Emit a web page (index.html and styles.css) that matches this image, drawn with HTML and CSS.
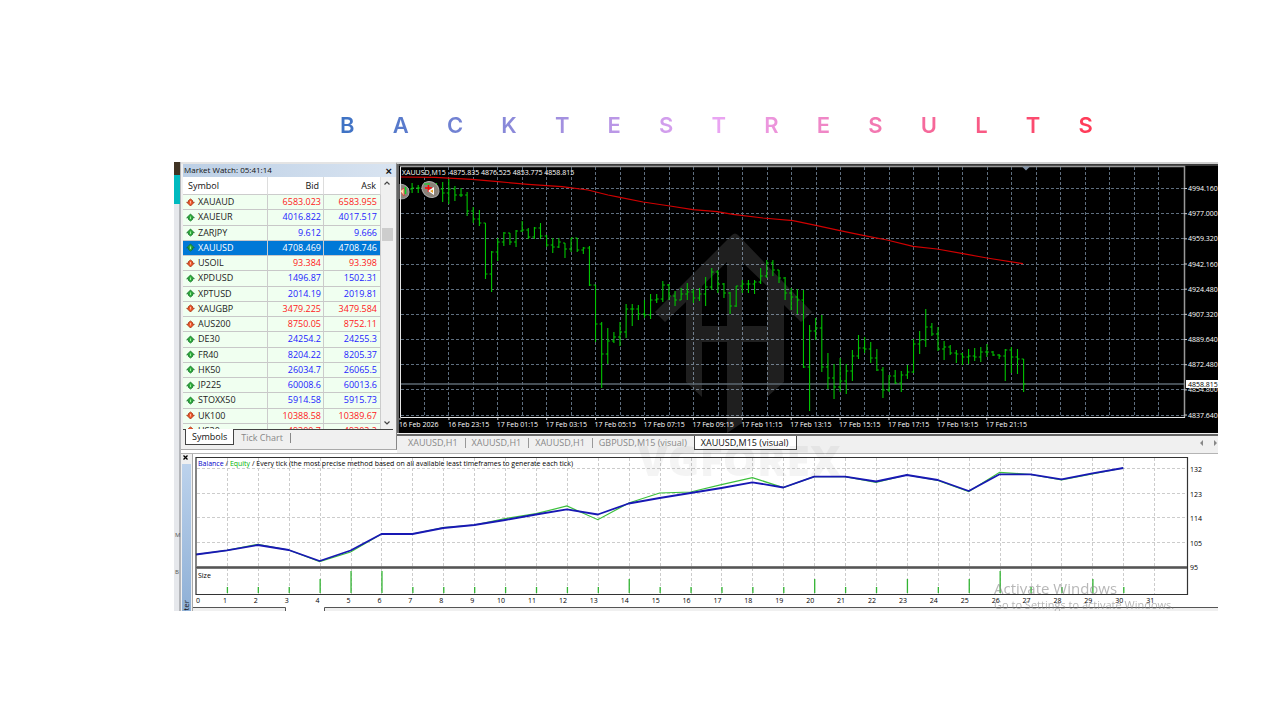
FILE: index.html
```html
<!DOCTYPE html>
<html lang="en">
<head>
<meta charset="utf-8">
<title>Backtest Results</title>
<link rel="stylesheet" href="styles.css">
</head>
<body>
<h1 class="title"><span>B</span><span>A</span><span>C</span><span>K</span><span>T</span><span>E</span><span>S</span><span>T</span><span>R</span><span>E</span><span>S</span><span>U</span><span>L</span><span>T</span><span>S</span></h1>
<main class="screen">
  <div class="strip"><i class="strip-dark"></i><i class="strip-teal"></i><span class="strip-m">M</span><span class="strip-b">B</span></div>
  <div class="app">
    <div class="top">
      <section class="watch">
        <header class="watch-bar"><span>Market Watch: 05:41:14</span><button class="close" aria-label="Close">×</button></header>
        <div class="watch-body">
          <div class="list">
            <table class="quotes">
              <thead><tr><th>Symbol</th><th>Bid</th><th>Ask</th></tr></thead>
              <tbody id="quotes"></tbody>
            </table>
          </div>
          <div class="scroll">
            <svg viewBox="0 0 8 6"><path d="M1.500 4.500L4 2L6.500 4.500"/></svg>
            <i class="thumb"></i>
            <svg viewBox="0 0 8 6"><path d="M1.500 1.500L4 4L6.500 1.500"/></svg>
          </div>
        </div>
        <nav class="watch-tabs"><button class="on">Symbols</button><button>Tick Chart</button></nav>
      </section>
      <section class="chart">
        <svg class="plot" viewBox="397 162 821 271" role="img" aria-label="XAUUSD M15 chart">
          <rect x="397" y="162" width="821" height="271" fill="#000"/>
          <rect x="397" y="162" width="821" height="2" fill="#d0d0d0"/>
          <rect x="397" y="164" width="821" height="2" fill="#3a3a3a"/>
          <rect x="397" y="164" width="2" height="269" fill="#666"/>
          <path id="grid" class="grid"/>
          <g class="mark">
            <path d="M732 235Q735 232 738 235L812 312L801 322L784 305V382L767 397V342H742V423L727 433V342H702V397L686 382V302L665 322L655 312ZM727 262L702 286V326H727ZM742 262V326H767V286Z" fill-rule="evenodd"/>
          </g>
          <path d="M400 384H1184" stroke="#5c6872" stroke-width="1.500"/>
          <path class="ma" d="M400 177L435 177.300L472 179.300L498 181.700L528 184.300L562 186.700L588 190L608 195L620 197.300L643 202L670 206L693 209.700L717 211.700L733 214.300L763 218L793 220.700L817 225.700L840 230.700L863 235.300L887 240L913 246.300L937 249L963 253.700L987 258L1023 263.700"/>
          <path id="bars" class="bars"/>
          <g>
            <path d="M400 184Q409 185 409 192T400 199Z" fill="#8b8279" stroke="#aaa"/>
            <path d="M400 191L404 188V196Z" fill="#ffe0b0" stroke="#d33" stroke-width=".8"/><path d="M405.500 187V194" stroke="#0d2" stroke-width="1.500"/>
            <ellipse cx="430.500" cy="189.500" rx="9" ry="7.500" transform="rotate(35 430.500 189.500)" fill="#8b8279" stroke="#aaa"/>
            <path d="M425 188H432M428.500 185V192" stroke="#f00" stroke-width="1.500"/><path d="M428 191L434 187V195Z" fill="#fff"/><path d="M430 191L433 189.500V193Z" fill="#e8a020"/>
            <path d="M424 184H430" stroke="#0d2"/>
          </g>
          <path d="M400 166.500H1184.500V417.500" fill="none" stroke="#999" stroke-width="1.500"/>
          <path d="M400.500 167V417.500H1185" fill="none" stroke="#e8e8e8"/>
          <path d="M1022 166.500H1030L1026 170.500Z" fill="#8090a4"/>
          <g id="axes" class="axis"></g>
          <text x="402" y="175" class="tiny light">XAUUSD,M15&#160; 4875.835 4876.525 4853.775 4858.815</text>
          <rect x="1186" y="380" width="32" height="8" fill="#fff"/>
          <text x="1188" y="387" class="tiny">4858.815</text>
        </svg>
        <nav class="chart-tabs">
          <button>XAUUSD,H1</button><button>XAUUSD,H1</button><button>XAUUSD,H1</button><button>GBPUSD,M15 (visual)</button><button class="on">XAUUSD,M15 (visual)</button>
          <svg class="arrows" viewBox="0 0 20 8"><path d="M5 1V7L2 4ZM16 1V7L19 4Z" fill="#888"/></svg>
        </nav>
      </section>
    </div>
    <svg class="tester" viewBox="181 453 1037 158" role="img" aria-label="Strategy tester graph">
      <defs><linearGradient id="side" x1="0" y1="0" x2="0" y2="1"><stop offset="0" stop-color="#bcd2ec"/><stop offset="1" stop-color="#8fb0d6"/></linearGradient></defs>
      <rect x="181" y="453" width="1037" height="158" fill="#fff"/>
      <rect x="181" y="453" width="11" height="158" fill="#f0f0f0"/>
      <path d="M181 453.500H1218" stroke="#b4b4b4"/>
      <rect x="182" y="464" width="9" height="147" fill="url(#side)"/>
      <path d="M192.500 454V611" stroke="#aaa"/>
      <path d="M183.500 455.500L187.500 459.500M187.500 455.500L183.500 459.500" stroke="#000" stroke-width="1.300"/>
      <text class="side-label" transform="translate(189 600) rotate(-90)" text-anchor="end">Tester</text>
      <path id="tgrid" class="tgrid"/>
      <path id="sizes" stroke="#32b432" stroke-width="1.300"/>
      <path id="equity" fill="none" stroke="#3cc03c" stroke-width="1.200"/>
      <path id="balance" fill="none" stroke="#1818b4" stroke-width="1.800" stroke-linejoin="round"/>
      <path d="M196 594.500V457.500H1187.500V594.500Z" fill="none" stroke="#333" stroke-width="1.200"/>
      <rect x="196" y="566" width="991" height="3" fill="#777"/><rect x="196" y="567" width="991" height="1" fill="#555"/>
      <text x="198" y="466" class="tiny"><tspan fill="#0000c8">Balance</tspan> / <tspan fill="#00b400">Equity</tspan> / Every tick (the most precise method based on all available least timeframes to generate each tick)</text>
      <text x="198" y="578" class="tiny">Size</text>
      <g id="taxes" class="tiny"></g>
      <rect x="193" y="608" width="1025" height="3" fill="#f0f0f0"/><rect x="286" y="607" width="38" height="4" fill="#fff"/>
      <path d="M193 607.500H285.500V611M324.500 611V607.500H1218" fill="none" stroke="#555"/>
      <text x="994" y="594" class="act-a">Activate Windows</text>
      <text x="994" y="609" class="act-b">Go to Settings to activate Windows.</text>
      <text x="638" y="476" class="brand">VGFOREX</text>
    </svg>
  </div>
</main>
<script src="chart.js"></script>
</body>
</html>
```
FILE: styles.css
```css
* { box-sizing: border-box; }
body { margin: 0; background: #fff; font-family: "Open Sans", "Noto Sans", sans-serif; color: #111; }
button { font: inherit; color: inherit; background: none; border: 0; padding: 0; margin: 0; }
svg { display: block; }

.title {
  display: flex; justify-content: space-between;
  margin: 110px 187px 22px 340px;
  font: 600 22px/30px Inter, sans-serif;
  background: linear-gradient(90deg, #3d72c4, #e9a5f3 50%, #ff3a56);
  -webkit-background-clip: text; background-clip: text; color: transparent;
}

.screen { display: flex; margin: 0 62px 0 174px; overflow: hidden; }
.strip { flex: 0 0 7px; min-width: 0; display: flex; flex-direction: column; background: #e6e8ec; border-right: 2px solid #b4b6ba; font-size: 6px; line-height: 8px; color: #555; }
.strip span { text-indent: 1px; }
.strip-dark { height: 13px; margin-right: -1px; background: #403424; }
.strip-teal { height: 29px; margin-right: -1px; background: #00babf; }
.strip-m { margin-top: 327px; }
.strip-b { margin-top: 29px; }
.app { flex: 1; min-width: 0; }

.top { display: flex; }
.watch { flex: 0 0 216px; display: flex; flex-direction: column; background: #f0f0f0; border-top: 2px solid #e4e4e4; border-right: 1px solid #888; border-bottom: 1px solid #aaa; margin-bottom: 3px; padding-left: 2px; }
.watch-bar { display: flex; justify-content: space-between; height: 13px; padding: 0 4px 0 1px; background: linear-gradient(90deg, #bccfe5, #d9e4f1); font-size: 8px; line-height: 12px; }
.close { font: 700 11px/12px "Liberation Sans", sans-serif; }
.watch-body { display: flex; height: 253px; border-bottom: 1px solid #444; margin-right: 3px; }
.list { flex: 1; overflow: hidden; background: #fff; }
.quotes { width: 100%; height: 262px; border-spacing: 0; table-layout: fixed; font-size: 9px; line-height: 12px; }
.quotes th { height: 18px; padding: 0 4px; font-weight: 400; text-align: right; background: #fff; border-right: 1px solid #ddd; border-bottom: 1px solid #ccc; }
.quotes th:first-child { width: 85px; text-align: left; padding-left: 5px; }
.quotes th:nth-child(2) { width: 56px; }
.quotes td { padding: 0 3px 0 3px; text-align: right; background: #f0fff0; border-right: 1px solid #ccc; border-bottom: 1px solid #c8c8c8; color: #1c1cff; }
.quotes td:nth-child(2) { padding-right: 2px; }
.quotes td:first-child { text-align: left; color: #222; }
.quotes .down td + td { color: #ff2020; }
.quotes .sel td, .quotes .sel td:first-child { background: #0078d7; color: #fff; }
.sym { display: flex; align-items: center; gap: 3px; }
.sym svg { width: 9px; height: 9px; }
.scroll { flex: 0 0 12px; display: flex; flex-direction: column; align-items: center; padding: 3px 0; }
.scroll svg { width: 8px; height: 6px; fill: none; stroke: #444; stroke-width: 1.2; }
.thumb { width: 11px; height: 13px; margin: 42px 0 auto; background: #cdcdcd; }
.watch-tabs { display: flex; height: 16px; padding-left: 2px; font-size: 9px; line-height: 14px; color: #888; }
.watch-tabs button { height: 15px; padding: 0 7px; }
.watch-tabs button:last-child { border-right: 1px solid #888; height: 10px; line-height: 10px; margin-top: 3px; }
.watch-tabs .on { margin-top: -1px; height: 16px; padding: 0 6px; background: #fff; color: #111; border: 1px solid #444; border-top: 0; }

.chart { flex: 1; min-width: 0; background: #f0f0f0; }
.plot { width: 100%; height: auto; }
.tiny, .axis { font-size: 7px; font-weight: 500; fill: #000; }
.light, .axis { fill: #fff; }
.grid { fill: none; stroke: #5e6e7e; stroke-width: 1; stroke-dasharray: 3 2; shape-rendering: crispEdges; }
.mark { fill: #fff; opacity: .12; }
.ma { fill: none; stroke: #d00000; stroke-width: 1.2; }
.bars { fill: none; stroke: #00c400; stroke-width: 1.1; }
.chart-tabs { display: flex; align-items: center; height: 16px; margin: 1px 0 3px; border-top: 2px solid #666; font-size: 9px; line-height: 10px; color: #888; }
.chart-tabs button { padding: 0 7px 0 6px; border-right: 1px solid #999; white-space: nowrap; }
.chart-tabs button:first-child { padding-left: 11px; }
.chart-tabs button:nth-child(4) { border-right: 0; }
.chart-tabs .on { align-self: stretch; background: #fff; color: #111; border: 1px solid #444; border-top: 0; }
.arrows { width: 20px; height: 8px; margin-left: auto; }

.tester { width: 100%; height: auto; overflow: visible; }
.tgrid { fill: none; stroke: #ccc; stroke-dasharray: 3 2; shape-rendering: crispEdges; }
.side-label { font-size: 8px; fill: #111; }
.act-a { font-size: 15px; fill: #888; opacity: .6; }
.act-b { font-size: 11px; fill: #888; opacity: .6; }
.brand { font: 800 43px "Open Sans", sans-serif; fill: #000; opacity: .04; }
```
FILE: chart.js
```javascript
const $ = id => document.getElementById(id);

const quotes = [
  ["XAUAUD", "6583.023", "6583.955", 0], ["XAUEUR", "4016.822", "4017.517", 1], ["ZARJPY", "9.612", "9.666", 1],
  ["XAUUSD", "4708.469", "4708.746", 1], ["USOIL", "93.384", "93.398", 0], ["XPDUSD", "1496.87", "1502.31", 1],
  ["XPTUSD", "2014.19", "2019.81", 1], ["XAUGBP", "3479.225", "3479.584", 0], ["AUS200", "8750.05", "8752.11", 0],
  ["DE30", "24254.2", "24255.3", 1], ["FR40", "8204.22", "8205.37", 1], ["HK50", "26034.7", "26065.5", 1],
  ["JP225", "60008.6", "60013.6", 1], ["STOXX50", "5914.58", "5915.73", 1], ["UK100", "10388.58", "10389.67", 0],
  ["US30", "49300.7", "49302.2", 0]
];
const up = '<svg viewBox="0 0 9 9"><path d="M4.500 1L8.300 4.800H6.500V6.500L4.500 8L2.500 6.500V4.800H.7Z" fill="#2fae3c" stroke="#14702a" stroke-width=".8"/><path d="M4.500 3.500V6" stroke="#9df09d"/></svg>';
const down = '<svg viewBox="0 0 9 9"><path d="M4.500 8L8.300 4.200H6.500V2.500L4.500 1L2.500 2.500V4.200H.7Z" fill="#f0582c" stroke="#a03010" stroke-width=".8"/><path d="M4.500 3V5.500" stroke="#ffb89a"/></svg>';
$("quotes").innerHTML = quotes.map(([s, b, a, u]) =>
  `<tr class="${u ? "up" : "down"}${s === "XAUUSD" ? " sel" : ""}"><td><span class="sym">${u ? up : down}${s}</span></td><td>${b}</td><td>${a}</td></tr>`).join("");

let d = "";
for (let i = 0; i < 31; i++) d += `M${Math.round(424 + i * 24.47)}.500 167V417`;
for (let i = 0; i < 10; i++) d += `M401 ${Math.round(188 + i * 25.17)}.500H1184`;
$("grid").setAttribute("d", d);

// high, low, close of each bar, as heights on the plot
const bars = [
  [187,196,189],[183,193,188],[185,193,188],[183,192,186],[184,192,188],[183,193,189],
  [182,202,193],[179,204,189],[186,201,195],[188,197,195],[192,216,211],[207,223,219],[210,226,223],[223,279,274],
  [251,292,252],[238,261,242],[232,246,233],[233,245,242],[230,247,231],[221,232,230],[228,239,237],[227,239,228],
  [223,239,236],[235,247,245],[238,253,247],[238,248,242],[243,258,249],[238,252,238],[238,252,250],[247,254,248],
  [246,286,285],[285,342,324],[322,388,354],[328,364,341],[332,343,337],[322,346,332],[304,338,309],[304,326,309],
  [305,320,314],[300,318,315],[294,319,300],[294,303,299],[281,302,285],[284,300,296],[291,306,300],[288,300,294],
  [283,300,292],[289,303,298],[288,301,294],[277,306,287],[268,290,272],[270,293,284],[283,298,293],[292,314,306],
  [286,307,286],[280,293,284],[280,293,284],[280,294,282],[268,284,276],[260,278,263],[260,276,270],[270,283,278],
  [277,300,293],[288,310,297],[289,314,300],[290,368,367],[325,411,331],[318,340,328],
  [315,372,367],[353,389,378],[364,399,387],[358,392,381],[364,394,371],[350,381,356],[335,359,348],[337,353,349],
  [342,363,358],[349,371,370],[367,398,390],[375,392,376],[370,384,383],[371,392,375],[365,379,372],[339,373,344],
  [331,354,340],[309,347,327],[323,336,334],[327,351,349],[341,360,347],[345,355,353],[350,363,354],[353,365,357],
  [349,364,356],[348,361,357],[347,362,352],[344,357,352],[351,356,355],[354,359,356],[349,381,350],[347,373,357],
  [349,374,359],[359,392,384]
];
const step = 6.115;
$("bars").setAttribute("d", bars.map(([h, l, c], i) => {
  const x = 1023.600 - (bars.length - 1 - i) * step;
  const open = i ? bars[i - 1][2] : c;
  const left = Math.min(Math.max(open, h), l);
  return `M${x} ${h}V${l}M${x - 2} ${left}H${x}M${x} ${c}H${x + 2}`;
}).join(""));

const text = (x, y, s, extra = "") => `<text x="${x}" y="${y}" ${extra}>${s}</text>`;
const prices = ["4994.160", "4977.000", "4959.320", "4942.160", "4924.480", "4907.320", "4889.640", "4872.480", "4854.800", "4837.640"];
const times = ["16 Feb 2026", "16 Feb 23:15", ...["01", "03", "05", "07", "09", "11", "13", "15", "17", "19", "21"].map(h => `17 Feb ${h}:15`)];
$("axes").innerHTML = prices.map((p, i) => text(1188, 191 + i * 25.17, p) + `<path d="M1184 ${188.500 + i * 25.17}h3" stroke="#ccc"/>`).join("")
  + times.map((t, i) => text(399 + i * 48.9, 427, t) + `<path d="M${400 + i * 48.9} 418v2" stroke="#ccc"/>`).join("");

const gx = i => 196 + i * 30.91;
d = "";
for (let i = 1; i < 32; i++) d += `M${Math.round(gx(i))}.500 458V594`;
[468, 493, 517, 542].forEach(y => d += `M197 ${y}.500H1187`);
$("tgrid").setAttribute("d", d);
const balance = [554.5,550.3,545,550,561,550.5,534,534,528,525,520,514.5,509.3,514.5,503.5,498,493,488,482.3,487.5,476.7,476.7,481.5,475,480,491,474.3,474.3,479.3,473.3,468];
const equity = [554.5,550.3,544.3,550,561.5,552,534,534,527.5,525,518.7,513.7,506,519.7,503,493,492,484.7,477.7,487.5,476.7,476.7,482.3,475,480.5,491.5,472.3,474.5,480,474,468];
const line = a => "M" + a.map((y, i) => `${gx(i)} ${y}`).join("L");
$("balance").setAttribute("d", line(balance));
$("equity").setAttribute("d", line(equity));
const tall = { 4: 579, 5: 571, 6: 571, 14: 579, 20: 579, 23: 579, 25: 579, 26: 571, 29: 579 };
d = "";
for (let i = 1; i <= 30; i++) d += `M${gx(i) + .5} 593V${tall[i] || 587}`;
$("sizes").setAttribute("d", d);
let t = text(196, 603, "0");
for (let i = 1; i < 32; i++) t += text(gx(i), 603, i, 'text-anchor="end"');
["132", "123", "114", "105", "95"].forEach((s, i) => t += text(1190, 472 + i * 24.5, s));
$("taxes").innerHTML = t;
```
